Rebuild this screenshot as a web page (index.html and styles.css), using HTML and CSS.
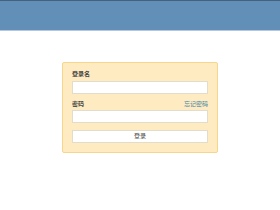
FILE: index.html
```html
<!DOCTYPE html>
<html lang="zh">
  <head>
    <meta charset="UTF-8" />
    <title>登录</title>
    <link rel="stylesheet" href="styles.css">
  </head>
  <body>
    <div class="header"></div>
    <div class="login-box">
      <div class="label-row">
        <label>登录名</label>
      </div>
      <input class="field" type="text" />
      <div class="label-row row-gap">
        <label>密码</label>
        <a href="#" class="forgot">忘记密码</a>
      </div>
      <input class="field" type="password" />
      <button class="login-button">登录</button>
    </div>
  </body>
</html>
```

FILE: styles.css
```css
body {
  margin: 0;
  font-family: "Liberation Sans", "Noto Sans CJK SC", sans-serif;
  background: #fff;
}

.header {
  height: 29px;
  background-color: #628fb8;
  border-top: 1px solid #44617e;
  border-bottom: 1px solid #b3c8dd;
}

.login-box {
  width: 136px;
  margin: 31px auto 0;
  padding: 7px 9px 9px;
  background-color: #feebc1;
  border: 1px solid #f7d68c;
  border-radius: 2px;
}

.label-row {
  display: flex;
  justify-content: space-between;
  height: 8px;
  line-height: 8px;
  font-size: 6px;
  margin-bottom: 3px;
}

.row-gap {
  margin-top: 6px;
  margin-bottom: 2px;
}

.label-row label {
  color: #444;
  font-weight: bold;
}

.forgot {
  color: #3f86a8;
  text-decoration: none;
}

.field {
  display: block;
  box-sizing: border-box;
  width: 100%;
  height: 13px;
  margin: 0;
  padding: 0;
  border: 1px solid #e2dccd;
  background: #fff;
}

.login-button {
  display: block;
  box-sizing: border-box;
  width: 100%;
  height: 13px;
  margin-top: 7px;
  padding: 0;
  border: 1px solid #e2dccd;
  background: #fff;
  color: #444;
  font-family: "Liberation Sans", "Noto Sans CJK SC", sans-serif;
  font-size: 6px;
  line-height: 11px;
}
```
